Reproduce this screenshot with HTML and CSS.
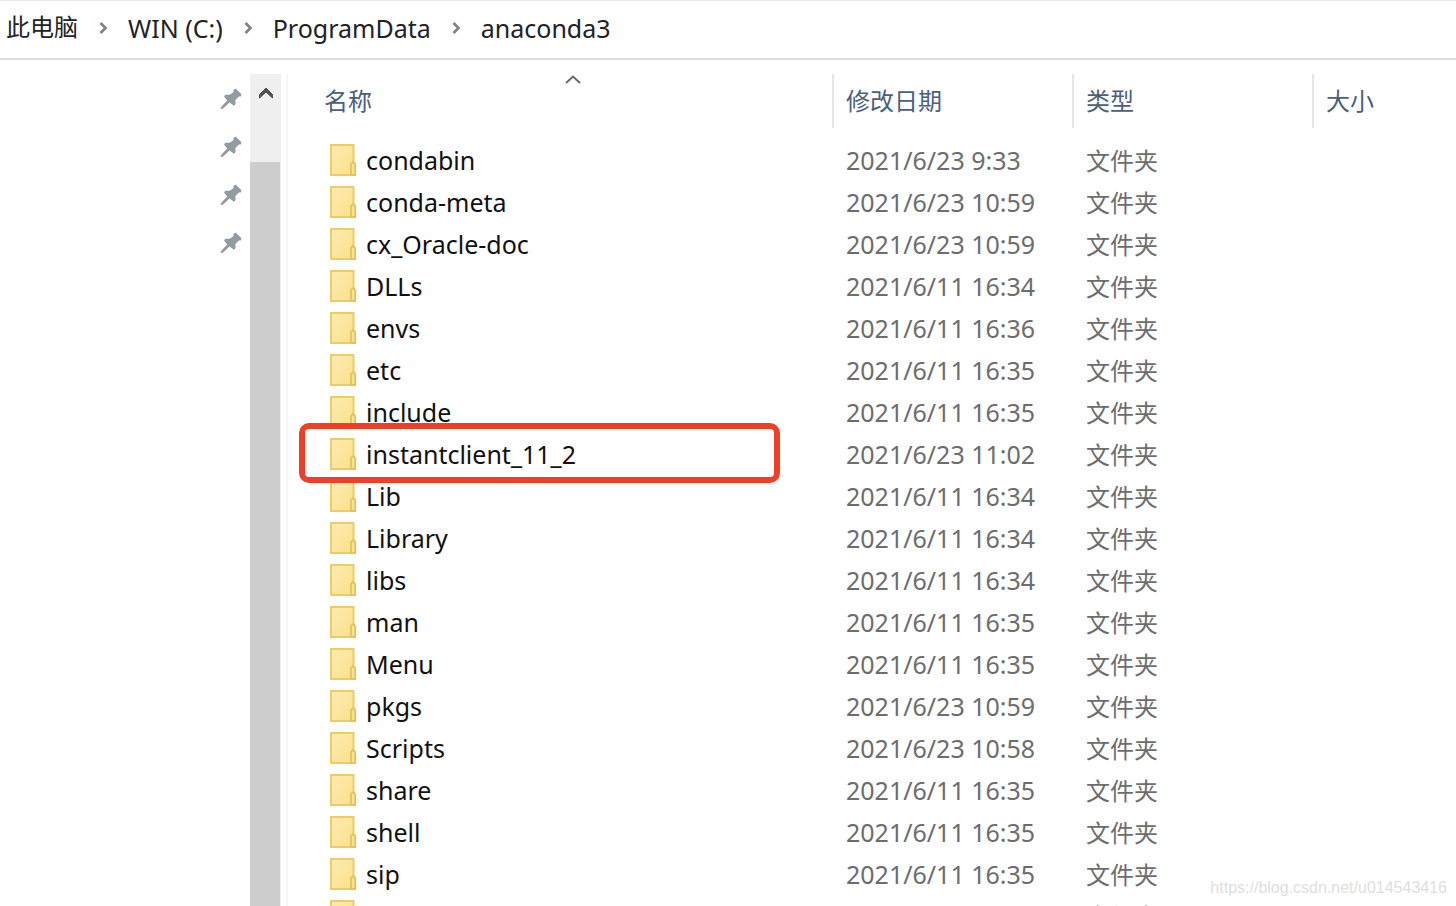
FILE: index.html
```html
<!DOCTYPE html>
<html lang="zh-CN">
<head>
    <meta charset="UTF-8">
    <meta name="viewport" content="width=device-width, initial-scale=1.0">
    <link rel="stylesheet" href="styles.css">
    <title>anaconda3</title>
</head>
<body>

<svg class="sprites" aria-hidden="true">
    <linearGradient id="paper" x1="0" y1="0" x2="1" y2="1">
        <stop offset="0" stop-color="#fdebb0"/>
        <stop offset="1" stop-color="#fbe08c"/>
    </linearGradient>
    <symbol id="chevron" viewBox="0 0 10 14">
        <path d="M2.5 2 L7.5 7 L2.5 12" fill="none" stroke="#858585" stroke-width="2.8"/>
    </symbol>
    <symbol id="pin" viewBox="0 0 22 22">
        <path d="M13.5 2 L15.500 .6 L21.400 6.200 L21 8.500 L18.8 8.600 L15.400 12 L15.600 16 L14 17.800 L9.600 14.600 L3 20.6 L.6 21.2 L.8 19.2 L7.200 12.400 L4 8.6 L5.4 6.8 L10 6.800 L13.4 4 Z" fill="#929aa2"/>
    </symbol>
    <symbol id="folder" viewBox="0 0 28 34">
        <path d="M2 2 H24.500 V32 H2 Z" fill="url(#paper)" stroke="#ebcd66" stroke-width="2"/>
        <path d="M22 32 V21 L23.500 19.500 H24.800 L26.200 21 V32 Z" fill="#fbe291" stroke="#e3c25e" stroke-width="1.8"/>
    </symbol>
</svg>

<nav class="breadcrumb" aria-label="路径">
    <a href="#" class="cjk">此电脑</a>
    <svg class="chevron"><use href="#chevron"/></svg>
    <a href="#">WIN (C:)</a>
    <svg class="chevron"><use href="#chevron"/></svg>
    <a href="#">ProgramData</a>
    <svg class="chevron"><use href="#chevron"/></svg>
    <a href="#">anaconda3</a>
</nav>

<div class="explorer">
    <aside class="sidebar">
        <ul class="pins">
            <li><svg class="pin"><use href="#pin"/></svg></li>
            <li><svg class="pin"><use href="#pin"/></svg></li>
            <li><svg class="pin"><use href="#pin"/></svg></li>
            <li><svg class="pin"><use href="#pin"/></svg></li>
        </ul>
        <div class="scrollbar">
            <button type="button" class="scroll-up" aria-label="向上滚动">
                <svg width="16" height="14" viewBox="0 0 16 14"><path d="M1.5 12 V8.5 L8 2 L14.5 8.5 V12 L8 6 Z" fill="#505050" stroke="#505050"/></svg>
            </button>
            <div class="thumb"></div>
        </div>
    </aside>

    <main class="files">
        <table>
            <colgroup>
                <col class="col-name">
                <col class="col-date">
                <col class="col-type">
                <col>
            </colgroup>
            <thead>
                <tr>
                    <th>
                        <button type="button">名称</button>
                        <svg class="sort" viewBox="0 0 18 12"><path d="M2 9 L9 2.500 L16 9" fill="none" stroke="#6a6a6a" stroke-width="2"/></svg>
                    </th>
                    <th><button type="button">修改日期</button></th>
                    <th><button type="button">类型</button></th>
                    <th><button type="button">大小</button></th>
                </tr>
            </thead>
            <tbody>
                <tr><td><svg class="folder"><use href="#folder"/></svg>condabin</td><td>2021/6/23 9:33</td><td>文件夹</td><td></td></tr>
                <tr><td><svg class="folder"><use href="#folder"/></svg>conda-meta</td><td>2021/6/23 10:59</td><td>文件夹</td><td></td></tr>
                <tr><td><svg class="folder"><use href="#folder"/></svg>cx_Oracle-doc</td><td>2021/6/23 10:59</td><td>文件夹</td><td></td></tr>
                <tr><td><svg class="folder"><use href="#folder"/></svg>DLLs</td><td>2021/6/11 16:34</td><td>文件夹</td><td></td></tr>
                <tr><td><svg class="folder"><use href="#folder"/></svg>envs</td><td>2021/6/11 16:36</td><td>文件夹</td><td></td></tr>
                <tr><td><svg class="folder"><use href="#folder"/></svg>etc</td><td>2021/6/11 16:35</td><td>文件夹</td><td></td></tr>
                <tr><td><svg class="folder"><use href="#folder"/></svg>include</td><td>2021/6/11 16:35</td><td>文件夹</td><td></td></tr>
                <tr class="marked"><td><svg class="folder"><use href="#folder"/></svg>instantclient_11_2</td><td>2021/6/23 11:02</td><td>文件夹</td><td></td></tr>
                <tr><td><svg class="folder"><use href="#folder"/></svg>Lib</td><td>2021/6/11 16:34</td><td>文件夹</td><td></td></tr>
                <tr><td><svg class="folder"><use href="#folder"/></svg>Library</td><td>2021/6/11 16:34</td><td>文件夹</td><td></td></tr>
                <tr><td><svg class="folder"><use href="#folder"/></svg>libs</td><td>2021/6/11 16:34</td><td>文件夹</td><td></td></tr>
                <tr><td><svg class="folder"><use href="#folder"/></svg>man</td><td>2021/6/11 16:35</td><td>文件夹</td><td></td></tr>
                <tr><td><svg class="folder"><use href="#folder"/></svg>Menu</td><td>2021/6/11 16:35</td><td>文件夹</td><td></td></tr>
                <tr><td><svg class="folder"><use href="#folder"/></svg>pkgs</td><td>2021/6/23 10:59</td><td>文件夹</td><td></td></tr>
                <tr><td><svg class="folder"><use href="#folder"/></svg>Scripts</td><td>2021/6/23 10:58</td><td>文件夹</td><td></td></tr>
                <tr><td><svg class="folder"><use href="#folder"/></svg>share</td><td>2021/6/11 16:35</td><td>文件夹</td><td></td></tr>
                <tr><td><svg class="folder"><use href="#folder"/></svg>shell</td><td>2021/6/11 16:35</td><td>文件夹</td><td></td></tr>
                <tr><td><svg class="folder"><use href="#folder"/></svg>sip</td><td>2021/6/11 16:35</td><td>文件夹</td><td></td></tr>
                <tr><td><svg class="folder"><use href="#folder"/></svg>ssl</td><td>2021/6/11 16:35</td><td>文件夹</td><td></td></tr>
            </tbody>
        </table>
    </main>
</div>

<span class="watermark">https://blog.csdn.net/u014543416</span>

</body>
</html>
```

FILE: styles.css
```css
* {
    box-sizing: border-box;
}

body {
    font-family: "Noto Sans", "Noto Sans CJK SC", sans-serif;
    font-size: 25px;
    background-color: #fff;
    color: #111;
    margin: 0;
    height: 100vh;
    display: flex;
    flex-direction: column;
    overflow: hidden;
    position: relative;
}

/* kept rendered so the gradient stays usable */
.sprites {
    position: absolute;
    width: 0;
    height: 0;
}

.breadcrumb {
    display: flex;
    align-items: center;
    gap: 20px;
    height: 60px;
    flex-shrink: 0;
    padding: 0 6px 4px;
    border-top: 1px solid #e8e8e8;
    border-bottom: 2px solid #dcdcdc;
}

.breadcrumb a {
    color: #222;
    text-decoration: none;
    white-space: nowrap;
}

.breadcrumb .cjk {
    font-size: 24px;
    line-height: 32px;
    padding-bottom: 2px;
}

.chevron {
    width: 10px;
    height: 14px;
}

.explorer {
    display: flex;
    flex: 1;
    min-height: 0;
    padding-top: 14px;
}

.sidebar {
    display: flex;
    justify-content: flex-end;
    width: 288px;
    flex-shrink: 0;
    padding-right: 5px;
    border-right: 2px solid #f6f6f6;
}

.pins {
    list-style: none;
    margin: 0;
    padding: 0 8px;
}

.pins li {
    height: 48px;
    padding-top: 2px;
    display: flex;
    align-items: center;
}

.pin {
    width: 22px;
    height: 22px;
}

.scrollbar {
    display: flex;
    flex-direction: column;
    width: 31px;
    background-color: #f0f0f0;
}

.scroll-up {
    height: 88px;
    padding: 12px 0 0;
    border: none;
    background: none;
    display: flex;
    align-items: flex-start;
    justify-content: center;
}

.thumb {
    flex: 1;
    margin-right: 1px;
    background-color: #cdcdcd;
}

.files {
    flex: 1;
    min-width: 0;
}

table {
    width: 100%;
    table-layout: fixed;
    border-collapse: separate;
    border-spacing: 0;
}

.col-name {
    width: 544px;
}

.col-date,
.col-type {
    width: 240px;
}

th {
    position: relative;
    height: 54px;
    padding: 0 0 4px 12px;
    text-align: left;
    border-left: 2px solid #e6e6e6;
}

th:first-child {
    padding-left: 36px;
    border-left: none;
}

th button {
    padding: 0;
    border: none;
    background: none;
    font-family: inherit;
    font-size: 24px;
    color: #4c607a;
}

/* sort arrow sits on the top edge of the header cell */
.sort {
    position: absolute;
    top: 0;
    left: 50%;
    width: 18px;
    height: 12px;
    margin-left: 4px;
}

/* space between header and first row */
tbody::before {
    content: "";
    display: block;
    height: 12px;
}

td {
    height: 42px;
    padding: 0 0 0 14px;
    line-height: 40px;
    vertical-align: top;
    color: #6d6d6d;
    white-space: nowrap;
}

td:first-child {
    padding-left: 41px;
    color: #111;
}

td:nth-child(3) {
    font-size: 24px;
    line-height: 42px;
}

.folder {
    width: 28px;
    height: 34px;
    margin: 3px 9px 0 0;
    vertical-align: top;
}

.marked td:first-child {
    position: relative;
}

.marked td:first-child::after {
    content: "";
    position: absolute;
    top: -11px;
    right: 52px;
    bottom: -7px;
    left: 11px;
    border: 6px solid #ee4027;
    border-radius: 10px;
}

.watermark {
    position: absolute;
    right: 9px;
    bottom: 9px;
    font-family: "Liberation Sans", Arial, sans-serif;
    font-size: 16px;
    color: #dedede;
}
```
